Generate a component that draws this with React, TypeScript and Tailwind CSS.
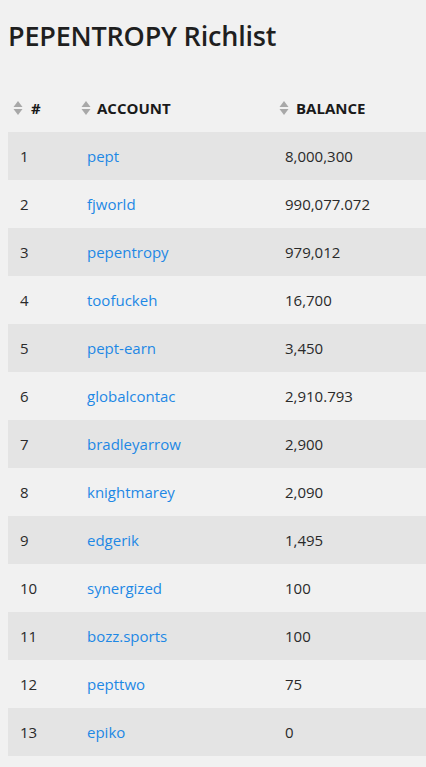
import React from "react";

const rows: [string, string][] = [
  ["pept", "8,000,300"],
  ["fjworld", "990,077.072"],
  ["pepentropy", "979,012"],
  ["toofuckeh", "16,700"],
  ["pept-earn", "3,450"],
  ["globalcontac", "2,910.793"],
  ["bradleyarrow", "2,900"],
  ["knightmarey", "2,090"],
  ["edgerik", "1,495"],
  ["synergized", "100"],
  ["bozz.sports", "100"],
  ["pepttwo", "75"],
  ["epiko", "0"],
];

function SortIcon() {
  return (
    <svg width="10" height="16" viewBox="0 0 10 16" className="shrink-0">
      <path d="M5 1 L9.5 7 L0.5 7 Z" fill="#a8a8a8" />
      <path d="M5 15 L9.5 9 L0.5 9 Z" fill="#a8a8a8" />
    </svg>
  );
}

export default function App() {
  return (
    <div
      className="min-h-[767px] w-[426px] overflow-hidden bg-[#f1f1f1] text-[#222]"
      style={{ fontFamily: '"Open Sans", "Noto Sans", sans-serif' }}
    >
      <h1 className="pl-[8px] pt-[16px] text-[27px] leading-[40px] font-semibold tracking-[-0.2px] text-[#1f1f1f]">
        PEPENTROPY Richlist
      </h1>
      <div className="ml-[8px] mt-[28px]">
        <div className="flex h-[48px] items-center text-[15px] font-bold text-[#1a1a1a]">
          <div className="flex w-[67px] items-center gap-[8px] pl-[5px]">
            <SortIcon />
            <span>#</span>
          </div>
          <div className="flex w-[198px] items-center gap-[6px] pl-[6px]">
            <SortIcon />
            <span>ACCOUNT</span>
          </div>
          <div className="flex items-center gap-[7px] pl-[6px]">
            <SortIcon />
            <span>BALANCE</span>
          </div>
        </div>
        {rows.map(([acc, bal], i) => (
          <div
            key={acc}
            className={`flex h-[48px] items-center text-[15px] ${i % 2 === 0 ? "bg-[#e4e4e4]" : ""}`}
          >
            <div className="w-[67px] pl-[12px] text-[#2a2a2a]">{i + 1}</div>
            <div className="w-[198px] pl-[12px] text-[#1e88e5]">{acc}</div>
            <div className="pl-[12px] text-[#2a2a2a]">{bal}</div>
          </div>
        ))}
      </div>
    </div>
  );
}
